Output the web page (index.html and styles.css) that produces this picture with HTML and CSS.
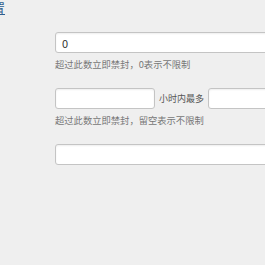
FILE: index.html
```html
<!DOCTYPE html>
<html lang="zh-CN">
<head>
    <meta charset="UTF-8">
    <meta name="viewport" content="width=device-width, initial-scale=1.0">
    <title>封禁设置</title>
    <link rel="stylesheet" href="styles.css">
</head>
<body>
    <div class="page">
        <div class="crumb"><a href="#">设置</a></div>
        <form class="settings">
            <div class="field">
                <input type="text" class="input input-wide" value="0">
                <p class="hint">超过此数立即禁封，0表示不限制</p>
            </div>
            <div class="field">
                <div class="inline-row">
                    <input type="text" class="input input-short">
                    <span class="inline-label">小时内最多</span>
                    <input type="text" class="input input-short">
                </div>
                <p class="hint">超过此数立即禁封，留空表示不限制</p>
            </div>
            <div class="field">
                <input type="text" class="input input-wide">
            </div>
        </form>
    </div>
</body>
</html>
```

FILE: styles.css
```css
body {
    margin: 0;
    padding: 0;
    background-color: #efefef;
    font-family: "Noto Sans CJK SC", "Noto Sans", sans-serif;
    font-size: 9.3px;
    color: #666;
    overflow: hidden;
}
.page {
    width: 265px;
    height: 265px;
    overflow: hidden;
}
.crumb {
    height: 15px;
    margin-left: -21px;
    font-size: 13px;
    line-height: 15px;
}
.crumb a {
    color: #2f5f8f;
    text-decoration: underline;
}
.settings {
    padding-left: 55px;
    padding-top: 17px;
}
.field {
    margin-bottom: 17px;
}
.input {
    box-sizing: border-box;
    height: 21px;
    padding: 0 6px;
    border: 1px solid #c4c4c4;
    border-radius: 3px;
    background-color: #fff;
    box-shadow: inset 0 1px 2px rgba(0, 0, 0, 0.07);
    font-family: "Noto Sans CJK SC", "Noto Sans", sans-serif;
    font-size: 11px;
    color: #333;
    display: block;
}
.input-wide {
    width: 320px;
}
.input-short {
    width: 100px;
}
.inline-row {
    display: flex;
    align-items: center;
    width: 320px;
}
.inline-label {
    margin: 0 4px;
    color: #555;
    font-size: 9px;
}
.hint {
    margin: 4px 0 0;
    line-height: 14px;
    color: #777;
}
```
